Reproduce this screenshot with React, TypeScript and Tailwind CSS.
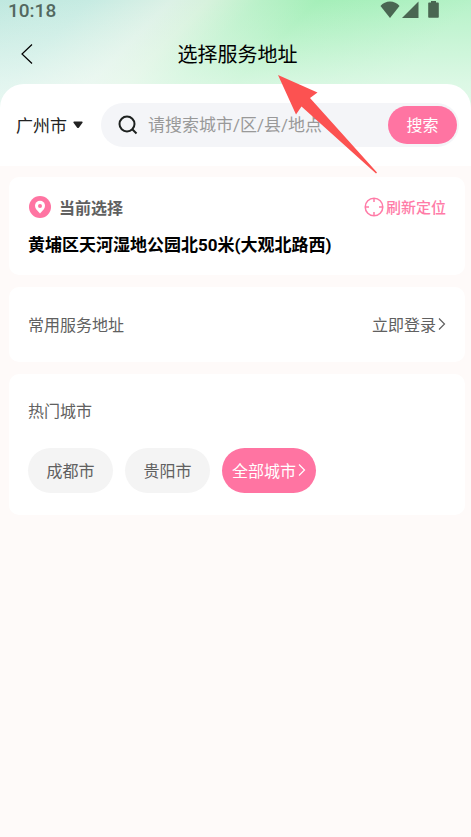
import type { ReactNode } from "react";

const cities = ["成都市", "贵阳市"];

function Card({ children, className }: { children: ReactNode; className: string }) {
  return <section className={`rounded-[10px] bg-white px-[19px] ${className}`}>{children}</section>;
}

function ChevronRight() {
  return (
    <svg width="8" height="14" viewBox="0 0 8 14" fill="none" stroke="currentColor" strokeWidth="1.2" aria-hidden="true">
      <path d="M1 1.5 6.5 7 1 12.5" />
    </svg>
  );
}

function StatusBar() {
  return (
    <div className="flex h-[22px] items-center justify-between pl-2 pr-8 text-[#53685f]">
      <span className="font-['Roboto',sans-serif] text-[19px] font-medium leading-[22px]">10:18</span>
      <svg width="60" height="22" viewBox="0 0 60 22" fill="#4a6652" aria-hidden="true">
        <path d="M11 18 1.500 6C6 0 16 0 20.500 6Z" />
        <path d="M39.500 1.500V18H23Z" />
        <path d="M52 1h5v1.500h2q.8 0 .8.8V17q0 .8-.8.8h-9q-.8 0-.8-.8V3.300q0-.8.8-.8h2Z" />
      </svg>
    </div>
  );
}

export default function App() {
  return (
    <div className="min-h-screen bg-[#fefaf9] font-['Noto_Sans_CJK_SC',sans-serif] text-[#606060]">
      <div className="relative bg-[linear-gradient(to_bottom,transparent_0%,rgba(245,252,248,0.6)_50%,rgba(245,252,248,0.75)_70%),linear-gradient(135deg,#bfe8df_0%,#c6ebe2_14%,#dcf1e6_27%,#d6f2dc_33%,#b9f1c8_41%,#a5efb9_50%,#aaf0be_60%,#b6f2c8_75%)]">
        <StatusBar />
        <header className="grid h-[62px] grid-cols-[1fr_auto_1fr] items-center pl-5 pr-4 pt-0.5 text-black">
          <button type="button" aria-label="返回" className="w-6">
            <svg width="14" height="22" viewBox="0 0 14 22" fill="none" stroke="currentColor" strokeWidth="1.2" aria-hidden="true">
              <path d="M12 1.500 2 11l10 9.500" />
            </svg>
          </button>
          <h1 className="text-xl">选择服务地址</h1>
        </header>

        <form className="flex items-center gap-[18px] rounded-t-[24px] bg-white pb-[19px] pl-4 pr-3 pt-[19px]">
          <button type="button" className="flex shrink-0 items-center gap-1.5 text-[17px] leading-6 text-[#222]">
            广州市
            <svg width="10" height="8" viewBox="0 0 10 8" fill="currentColor" aria-hidden="true">
              <path d="M1 .5h8q1 .3.500 1.200L6 6.500q-1 1-2 0L.500 1.700Q0 .8 1 .5Z" />
            </svg>
          </button>
          <div className="flex h-11 min-w-0 flex-1 items-center rounded-full bg-[#f4f5f8] pl-[17px]">
            <svg width="20" height="20" viewBox="0 0 20 20" fill="none" stroke="#1d211f" strokeWidth="2" aria-hidden="true">
              <circle cx="9" cy="9" r="7.500" />
              <path d="m14 14 4.500 4.500" />
            </svg>
            <input
              type="text"
              aria-label="搜索地点"
              placeholder="请搜索城市/区/县/地点"
              className="ml-2.5 min-w-0 flex-1 bg-transparent font-['Roboto','Noto_Sans_CJK_SC',sans-serif] text-[17px] leading-6 outline-none placeholder:text-[#999]"
            />
            <button type="submit" className="mr-0.5 h-[38px] w-[69px] shrink-0 rounded-full bg-[#ff74a2] pb-0.5 text-base text-white">
              搜索
            </button>
          </div>
        </form>

        {/* Pointer towards the page title */}
        <svg className="pointer-events-none absolute left-[278px] top-[75px]" width="100" height="99" viewBox="0 0 100 99" fill="#fc5251" aria-hidden="true">
          <path d="M0 0 39.500 17.500 32 23 99 97.500 98 98.500 23.500 31.500 18 39.500Z" />
        </svg>
      </div>

      <main className="flex flex-col gap-3 pb-3 pl-[9px] pr-1.5 pt-[11px]">
        <Card className="pb-[18px] pt-[18px]">
          <div className="flex items-center justify-between">
            <h2 className="flex items-center gap-2 text-base font-bold leading-6">
              <svg width="23" height="24" viewBox="0 0 23 24" aria-hidden="true">
                <circle cx="12" cy="12" r="11" fill="#ff74a2" />
                <path d="M12 18.500C9 15.500 7 13.500 7 10.800a5 5 0 0 1 10 0c0 2.700-2 4.700-5 7.700Z" fill="#fff" />
                <circle cx="12" cy="11" r="2" fill="#ff74a2" />
              </svg>
              当前选择
            </h2>
            <button type="button" className="flex items-center gap-0.5 text-[15px] font-medium leading-6 text-[#ff7ba7]">
              <svg width="20" height="20" viewBox="0 0 20 20" fill="none" stroke="currentColor" strokeWidth="1.500" aria-hidden="true">
                <circle cx="10" cy="10" r="8.800" />
                <path d="M10 1v4M10 15v4M1 10h4M15 10h4" />
              </svg>
              刷新定位
            </button>
          </div>
          <p className="mt-3.5 font-['Roboto','Noto_Sans_CJK_SC',sans-serif] text-[17px] font-bold leading-6 text-black">
            黄埔区天河湿地公园北50米(大观北路西)
          </p>
        </Card>

        <Card className="flex items-center justify-between pb-[26px] pt-[25px]">
          <h2 className="text-base">常用服务地址</h2>
          <a href="#login" className="flex items-center gap-0.5 text-base">
            立即登录
            <ChevronRight />
          </a>
        </Card>

        <Card className="pb-[22px] pt-6">
          <h2 className="text-base">热门城市</h2>
          <div className="mt-[26px] flex flex-wrap gap-3">
            {cities.map((city) => (
              <button key={city} type="button" className="h-[45px] w-[85px] rounded-full bg-[#f4f4f4] pb-0.5 text-base">
                {city}
              </button>
            ))}
            <button type="button" className="flex h-[45px] items-center gap-0.5 rounded-full bg-[#ff74a2] px-2.5 pb-0.5 text-base text-white">
              全部城市
              <ChevronRight />
            </button>
          </div>
        </Card>
      </main>
    </div>
  );
}
